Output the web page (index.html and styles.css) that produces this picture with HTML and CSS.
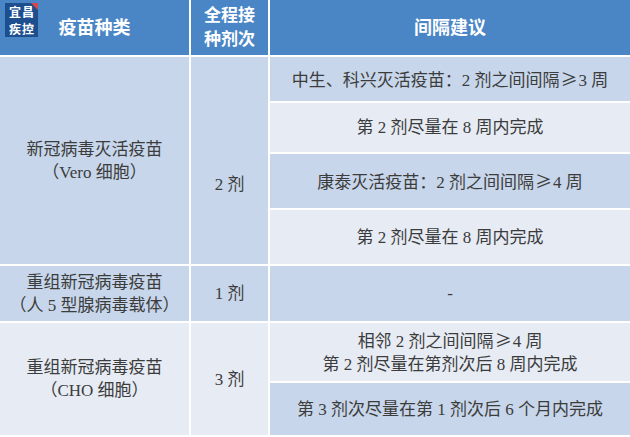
FILE: index.html
```html
<!DOCTYPE html>
<html lang="zh">
<head>
<meta charset="utf-8">
<link rel="stylesheet" href="styles.css">
</head>
<body>
<div class="page">
  <div class="badge"><span class="bl">宜昌</span><span class="bl">疾控</span><i class="corner"></i></div>
  <div class="table">
    <div class="cell head c1"><span>疫苗种类</span></div>
    <div class="cell head c2"><span>全程接<br>种剂次</span></div>
    <div class="cell head c3"><span>间隔建议</span></div>

    <div class="cell blue c1 r-vero"><span>新冠病毒灭活疫苗<br>（Vero 细胞）</span></div>
    <div class="cell blue c2 r-vero low"><span>2 剂</span></div>
    <div class="cell blue c3"><span>中生、科兴灭活疫苗：2 剂之间间隔<span class="ge">≥</span>3 周</span></div>
    <div class="cell light c3"><span>第 2 剂尽量在 8 周内完成</span></div>
    <div class="cell blue c3"><span>康泰灭活疫苗：2 剂之间间隔<span class="ge">≥</span>4 周</span></div>
    <div class="cell light c3"><span>第 2 剂尽量在 8 周内完成</span></div>

    <div class="cell blue c1"><span>重组新冠病毒疫苗<br>（人 5 型腺病毒载体）</span></div>
    <div class="cell blue c2"><span>1 剂</span></div>
    <div class="cell blue c3"><span>-</span></div>

    <div class="cell light c1 r-cho"><span>重组新冠病毒疫苗<br>（CHO 细胞）</span></div>
    <div class="cell light c2 r-cho"><span>3 剂</span></div>
    <div class="cell light c3"><span>相邻 2 剂之间间隔<span class="ge">≥</span>4 周<br>第 2 剂尽量在第剂次后 8 周内完成</span></div>
    <div class="cell blue c3"><span>第 3 剂次尽量在第 1 剂次后 6 个月内完成</span></div>
  </div>
</div>
</body>
</html>
```
FILE: styles.css
```css
html, body {
  margin: 0;
  padding: 0;
  background: #ffffff;
}
.page {
  position: relative;
  width: 630px;
  height: 437px;
  overflow: hidden;
}
.table {
  display: grid;
  grid-template-columns: 189px 77px 1fr;
  grid-template-rows: 55px 44px 49px 54px 54px 55px 58px 52px;
  column-gap: 2px;
  row-gap: 2px;
  background: #ffffff;
  font-family: "Liberation Serif", "Noto Sans CJK SC", serif;
  font-size: 17px;
  line-height: 23px;
  color: #3c3c3c;
}
.cell {
  display: flex;
  align-items: center;
  justify-content: center;
  text-align: center;
}
.cell .ge {
  font-family: "Noto Sans CJK SC", sans-serif;
  margin: 0 1px;
}
.c1 { grid-column: 1; }
.c2 { grid-column: 2; }
.c3 { grid-column: 3; }
.r-vero { grid-row: 2 / span 4; }
.r-cho { grid-row: 7 / span 2; }
.low { padding-top: 48px; }
.head {
  background: #4a86c6;
  color: #ffffff;
  font-weight: bold;
  font-size: 17px;
  line-height: 24px;
}
.head.c1 { font-size: 18px; }
.head.c3 { font-size: 18px; }
.blue { background: #c7d6ea; }
.light { background: #e6ebf4; }
.badge {
  position: absolute;
  left: 5px;
  top: 3px;
  width: 33px;
  height: 34px;
  background: #1d4f8f;
  color: #ffffff;
  font-family: "Noto Sans CJK SC", sans-serif;
  font-weight: bold;
  font-size: 12px;
  display: flex;
  flex-direction: column;
  align-items: center;
  justify-content: center;
  z-index: 2;
}
.bl {
  display: block;
  height: 17px;
  line-height: 17px;
  letter-spacing: 1px;
  margin-right: -1px;
}
.corner {
  position: absolute;
  right: 0;
  top: 0;
  width: 0;
  height: 0;
  border-top: 7px solid #d8454a;
  border-left: 7px solid transparent;
}
```
